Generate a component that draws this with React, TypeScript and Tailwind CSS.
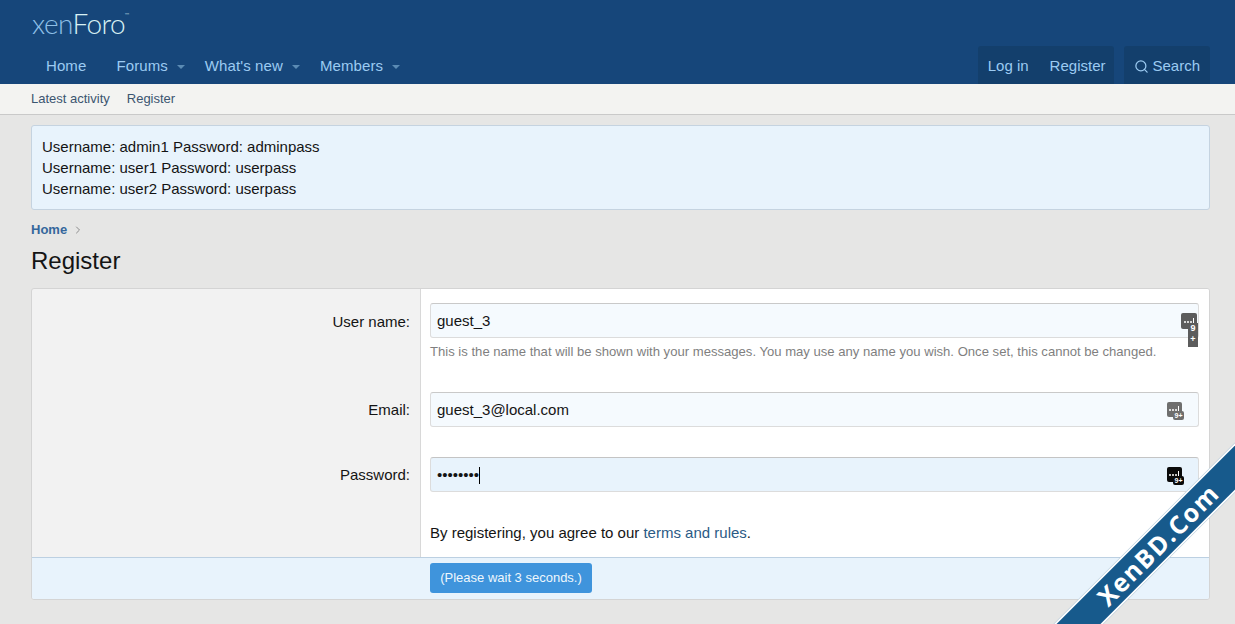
import React from 'react';
import { Search, ChevronRight } from 'lucide-react';

const sans = "font-['Liberation_Sans',Arial,sans-serif]";

function Caret() {
  return <span className="ml-[9px] mt-px h-0 w-0 border-x-[4px] border-t-[4px] border-x-transparent border-t-[#5b8bb4]" />;
}

function NavItem({ label, caret }: { label: string; caret?: boolean }) {
  return (
    <div className="flex items-center text-[15px] tracking-[0.1px] text-[#9ccbf2]">
      <span>{label}</span>
      {caret && <Caret />}
    </div>
  );
}

// password manager badge sitting inside the inputs
function KeyBadge({ color, narrow }: { color: string; narrow?: boolean }) {
  if (narrow) {
    return (
      <div className="absolute left-[750px] top-[9px] h-[34px] w-[17px]">
        <div className="h-[16px] w-[16px] rounded-[2px]" style={{ background: color }}>
          <div className="flex items-end gap-px pl-[3px] pt-[5px]">
            <Dots />
          </div>
        </div>
        <div
          className="absolute left-[7px] top-[10px] flex h-[24px] w-[10px] flex-col items-center text-[9px] font-bold leading-[11px] text-white"
          style={{ background: color }}
        >
          <span>9</span>
          <span>+</span>
        </div>
      </div>
    );
  }
  return (
    <div className="absolute left-[736px] top-[9px] h-[18px] w-[17px]">
      <div className="h-[15px] w-[15px] rounded-[2px]" style={{ background: color }}>
        <div className="flex items-end gap-px pl-[2px] pt-[4px]">
          <Dots />
        </div>
      </div>
      <div
        className="absolute left-[6px] top-[9px] flex h-[9px] w-[11px] items-center justify-center rounded-[2px] text-[7px] font-bold leading-none text-white"
        style={{ background: color }}
      >
        9+
      </div>
    </div>
  );
}

function Dots() {
  return (
    <>
      <span className="h-[2px] w-[2px] rounded-full bg-white" />
      <span className="h-[2px] w-[2px] rounded-full bg-white" />
      <span className="h-[2px] w-[2px] rounded-full bg-white" />
      <span className="h-[5px] w-px bg-white" />
    </>
  );
}

function Field({ value, focused, children }: { value: React.ReactNode; focused?: boolean; children?: React.ReactNode }) {
  return (
    <div
      className={`relative flex h-[35px] w-[769px] items-center rounded-[3px] border border-[#dcdcdc] px-[6px] pt-px text-[15px] text-[#141414] ${
        focused ? 'border-t-[#c4c4c4] bg-[#e8f3fc]' : 'border-t-[#c9c9c9] bg-[#f5fafe]'
      }`}
    >
      {value}
      {children}
    </div>
  );
}

function FormRow({
  label,
  className,
  labelClass,
  children,
}: {
  label?: string;
  className?: string;
  labelClass?: string;
  children: React.ReactNode;
}) {
  return (
    <div className={`flex ${className ?? ''}`}>
      <div className="flex w-[388px] shrink-0 justify-end pr-[10px] text-[15px] text-[#141414]">
        {label && <span className={`leading-[20px] ${labelClass ?? 'pt-[8px]'}`}>{label}</span>}
      </div>
      <div className="flex-1 border-l border-[#d8d8d8] bg-white pl-[9px] pr-[10px]">{children}</div>
    </div>
  );
}

export default function App() {
  return (
    <div className={`relative h-[624px] w-[1235px] overflow-hidden bg-[#e6e6e5] ${sans}`}>
      <header className="h-[84px] bg-[#16467a]">
        <div className="flex h-[46px] items-start pl-[32px] pt-[4px]">
          <span className="font-['Lato',sans-serif] text-[28px] font-light leading-[38px] tracking-[-0.6px] text-[#8fc0e8]">
            xen<span className="text-[#d8f1f4]">Foro</span>
            <sup className="text-[6px] text-[#d8f1f4] align-[14px]">™</sup>
          </span>
        </div>
        <nav className="flex h-[38px] items-center pl-[46px] pr-[25px] pt-[2px]">
          <div className="flex items-center gap-[30px]">
            <NavItem label="Home" />
            <div className="flex items-center gap-[20px]">
              <NavItem label="Forums" caret />
              <NavItem label="What's new" caret />
              <NavItem label="Members" caret />
            </div>
          </div>
          <div className="-mt-[2px] ml-auto flex h-[38px] items-stretch gap-[10px] text-[15px] text-[#9ccbf2]">
            <div className="flex items-center gap-[21px] rounded-t-[3px] bg-[#133f6c] pl-[10px] pr-[9px] pt-[2px]">
              <span>Log in</span>
              <span>Register</span>
            </div>
            <div className="flex items-center gap-[3px] rounded-t-[3px] bg-[#133f6c] pl-[10px] pr-[10px] pt-[2px]">
              <Search size={15} strokeWidth={2} />
              <span>Search</span>
            </div>
          </div>
        </nav>
      </header>

      <div className="flex h-[31px] items-center gap-[17px] border-b border-[#c9c9c9] bg-[#f3f3f1] pl-[31px] text-[13px] text-[#3b5570]">
        <span>Latest activity</span>
        <span>Register</span>
      </div>

      <main className="pl-[31px] pr-[25px] pt-[10px]">
        <div className="h-[85px] rounded-[3px] border border-[#c5d3e0] bg-[#e8f3fc] px-[10px] py-[10px] text-[15px] leading-[21px] text-[#141414]">
          <div>Username: admin1 Password: adminpass</div>
          <div>Username: user1 Password: userpass</div>
          <div>Username: user2 Password: userpass</div>
        </div>

        <div className="mt-[12px] flex h-[16px] items-center gap-[5px] text-[13px] font-bold text-[#35679c]">
          <span>Home</span>
          <ChevronRight size={12} className="text-[#8c8c8c]" />
        </div>

        <h1 className="mt-[5px] h-[45px] text-[24px] font-normal leading-[36px] text-[#141414]">Register</h1>

        <div className="h-[312px] overflow-hidden rounded-[3px] border border-[#d4d4d4] bg-[#f2f2f2]">
          <FormRow label="User name:" labelClass="pt-[23px]" className="h-[103px]">
            <div className="pt-[14px]">
              <Field value="guest_3">
                <KeyBadge color="#5c5c5c" narrow />
              </Field>
              <p className="mt-[6px] text-[13.1px] leading-[16px] text-[#7f7f7f]">
                This is the name that will be shown with your messages. You may use any name you wish. Once set, this cannot be changed.
              </p>
            </div>
          </FormRow>
          <FormRow label="Email:" className="h-[65px]">
            <Field value="guest_3@local.com">
              <KeyBadge color="#6e6e6e" />
            </Field>
          </FormRow>
          <FormRow label="Password:" className="h-[100px]">
            <Field
              focused
              value={
                <>
                  <span>••••••••</span>
                  <span className="h-[17px] w-px bg-black" />
                </>
              }
            >
              <KeyBadge color="#0a0a0a" />
            </Field>
            <p className="mt-[31px] text-[15px] leading-[20px] text-[#141414]">
              By registering, you agree to our <span className="text-[#2b5a85]">terms and rules</span>.
            </p>
          </FormRow>
          <div className="flex h-[42px] items-center border-t border-[#bcd0e2] bg-[#e8f3fc] pb-[2px] pl-[398px]">
            <button className="h-[30px] w-[162px] rounded-[3px] bg-[#3f94dc] text-[13px] text-[#eef7fd]">(Please wait 3 seconds.)</button>
          </div>
        </div>
      </main>

      {/* corner ribbon */}
      <div className="absolute left-[1028px] top-[527px] flex h-[35px] w-[260px] -rotate-45 items-center justify-center border-y-2 border-white bg-[#175a8c] font-['Open_Sans',sans-serif] text-white">
        <span className="text-[25px] font-bold leading-none tracking-[1.5px]">XenBD.Com</span>
      </div>
    </div>
  );
}
